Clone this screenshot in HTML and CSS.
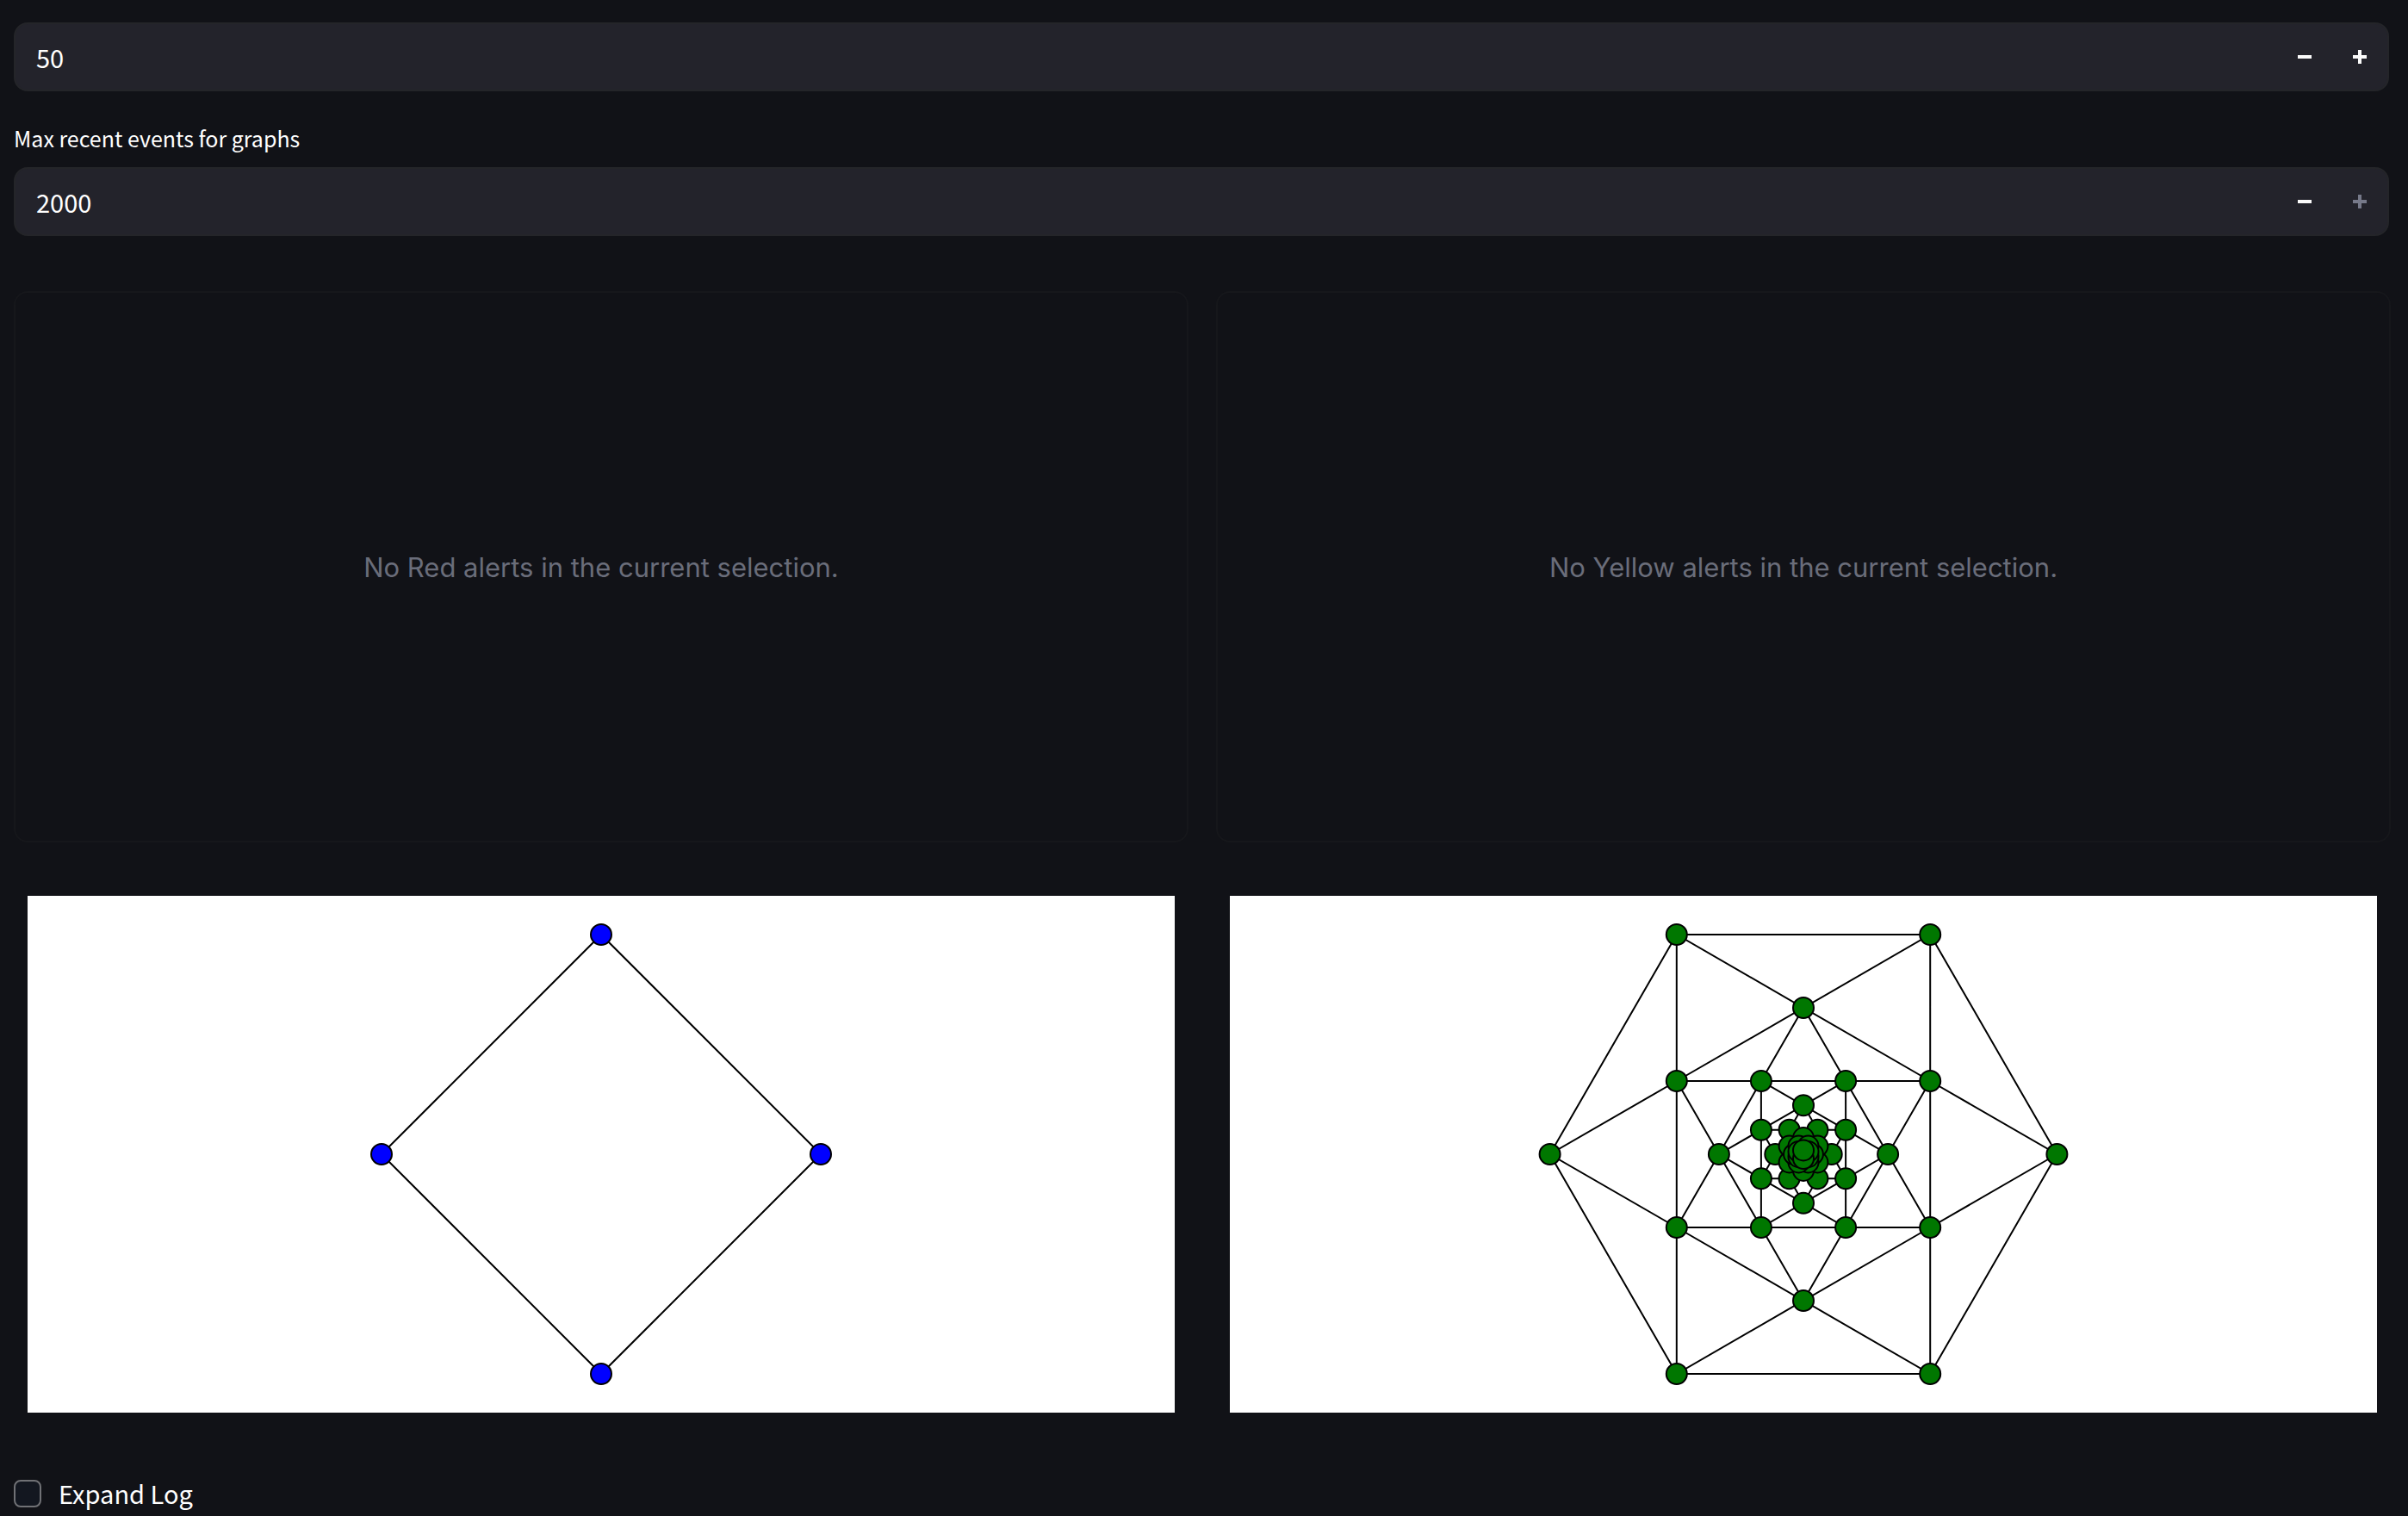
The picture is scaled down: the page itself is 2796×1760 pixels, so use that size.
FILE: index.html
```html
<!DOCTYPE html>
<html lang="en">
<head>
<meta charset="utf-8">
<title>Event monitor</title>
<link rel="stylesheet" href="styles.css">
</head>
<body>
<main class="page">
  <div class="field">
    <div class="number">
      <input class="number-input" type="text" inputmode="numeric" value="50" aria-label="Max rows">
      <button class="step" type="button" aria-label="Decrease"><svg class="icon" viewBox="0 0 16 16"><path d="M0 6h16v4H0z"/></svg></button>
      <button class="step" type="button" aria-label="Increase"><svg class="icon" viewBox="0 0 16 16"><path d="M6 0h4v6h6v4h-6v6H6v-6H0V6h6z"/></svg></button>
    </div>
  </div>
  <div class="field">
    <label class="label" for="max-events">Max recent events for graphs</label>
    <div class="number">
      <input class="number-input" id="max-events" type="text" inputmode="numeric" value="2000">
      <button class="step" type="button" aria-label="Decrease"><svg class="icon" viewBox="0 0 16 16"><path d="M0 6h16v4H0z"/></svg></button>
      <button class="step" type="button" aria-label="Increase" disabled><svg class="icon" viewBox="0 0 16 16"><path d="M6 0h4v6h6v4h-6v6H6v-6H0V6h6z"/></svg></button>
    </div>
  </div>

  <div class="grid">
    <section class="alert"><p class="alert-text">No Red alerts in the current selection.</p></section>
    <section class="alert"><p class="alert-text">No Yellow alerts in the current selection.</p></section>
  </div>

  <div class="grid">
    <figure class="graph">
      <svg class="plot" viewBox="-666 -300 1332 600" role="img" aria-label="Blue event graph">
        <polygon class="edge" points="255,0 0,255 -255,0 0,-255"/>
        <g class="node blue">
          <circle cx="255" cy="0" r="12"/><circle cx="0" cy="255" r="12"/><circle cx="-255" cy="0" r="12"/><circle cx="0" cy="-255" r="12"/>
        </g>
      </svg>
    </figure>
    <figure class="graph">
      <svg class="plot" viewBox="-666 -300 1332 600" role="img" aria-label="Green event graph">
        <!-- outer ring and the links between neighbouring rings -->
        <g class="edge">
          <polygon points="294.4,0 147.2,255 -147.2,255 -294.4,0 -147.2,-255 147.2,-255"/>
          <polygon points="294.4,0 147.2,85 147.2,255 0,170 -147.2,255 -147.2,85 -294.4,0 -147.2,-85 -147.2,-255 0,-170 147.2,-255 147.2,-85"/>
          <polygon points="98.1,0 147.2,85 49.1,85 0,170 -49.1,85 -147.2,85 -98.1,0 -147.2,-85 -49.1,-85 0,-170 49.1,-85 147.2,-85"/>
          <polygon points="98.1,0 49.1,28.3 49.1,85 0,56.7 -49.1,85 -49.1,28.3 -98.1,0 -49.1,-28.3 -49.1,-85 0,-56.7 49.1,-85 49.1,-28.3"/>
          <polygon points="32.7,0 49.1,28.3 16.4,28.3 0,56.7 -16.4,28.3 -49.1,28.3 -32.7,0 -49.1,-28.3 -16.4,-28.3 0,-56.7 16.4,-28.3 49.1,-28.3"/>
        </g>
        <!-- inner rings -->
        <g class="edge">
          <polygon points="147.2,85 0,170 -147.2,85 -147.2,-85 0,-170 147.2,-85"/>
          <polygon points="98.1,0 49.1,85 -49.1,85 -98.1,0 -49.1,-85 49.1,-85"/>
          <polygon points="49.1,28.3 0,56.7 -49.1,28.3 -49.1,-28.3 0,-56.7 49.1,-28.3"/>
        </g>
        <g class="node green">
          <circle cx="294.4" cy="0" r="12"/><circle cx="147.2" cy="255" r="12"/><circle cx="-147.2" cy="255" r="12"/><circle cx="-294.4" cy="0" r="12"/><circle cx="-147.2" cy="-255" r="12"/><circle cx="147.2" cy="-255" r="12"/>
          <circle cx="147.2" cy="85" r="12"/><circle cx="0" cy="170" r="12"/><circle cx="-147.2" cy="85" r="12"/><circle cx="-147.2" cy="-85" r="12"/><circle cx="0" cy="-170" r="12"/><circle cx="147.2" cy="-85" r="12"/>
          <circle cx="98.1" cy="0" r="12"/><circle cx="49.1" cy="85" r="12"/><circle cx="-49.1" cy="85" r="12"/><circle cx="-98.1" cy="0" r="12"/><circle cx="-49.1" cy="-85" r="12"/><circle cx="49.1" cy="-85" r="12"/>
          <circle cx="49.1" cy="28.3" r="12"/><circle cx="0" cy="56.7" r="12"/><circle cx="-49.1" cy="28.3" r="12"/><circle cx="-49.1" cy="-28.3" r="12"/><circle cx="0" cy="-56.7" r="12"/><circle cx="49.1" cy="-28.3" r="12"/>
          <circle cx="32.7" cy="0" r="12"/><circle cx="16.4" cy="28.3" r="12"/><circle cx="-16.4" cy="28.3" r="12"/><circle cx="-32.7" cy="0" r="12"/><circle cx="-16.4" cy="-28.3" r="12"/><circle cx="16.4" cy="-28.3" r="12"/>
          <circle cx="16.4" cy="9.4" r="12"/><circle cx="0" cy="18.9" r="12"/><circle cx="-16.4" cy="9.4" r="12"/><circle cx="-16.4" cy="-9.4" r="12"/><circle cx="0" cy="-18.9" r="12"/><circle cx="16.4" cy="-9.4" r="12"/>
          <circle cx="10.9" cy="0" r="12"/><circle cx="5.5" cy="9.4" r="12"/><circle cx="-5.5" cy="9.4" r="12"/><circle cx="-10.9" cy="0" r="12"/><circle cx="-5.5" cy="-9.4" r="12"/><circle cx="5.5" cy="-9.4" r="12"/>
          <circle cx="5.5" cy="3.1" r="12"/><circle cx="5.5" cy="-3.1" r="12"/><circle cx="-5.5" cy="3.1" r="12"/><circle cx="-5.5" cy="-3.1" r="12"/><circle cx="0" cy="5" r="12"/><circle cx="0" cy="-4.6" r="12"/>
        </g>
      </svg>
    </figure>
  </div>

  <label class="check"><input class="check-box" type="checkbox"><span class="check-text">Expand Log</span></label>
</main>
</body>
</html>
```
FILE: styles.css
```css
* {
  box-sizing: border-box;
}

body {
  margin: 0;
  background: #111217;
  color: #fff;
  font-family: "Noto Sans CJK JP", "Noto Sans", sans-serif;
  font-weight: 400;
}

.page {
  padding: 26px 20px 8px 16px;
}

.field {
  margin-right: 2px;
}

.label {
  display: block;
  padding: 34px 0 14px;
  font-size: 25px;
  line-height: 40px;
}

.number {
  display: flex;
  height: 80px;
  border: 2px solid #242529;
  border-radius: 16px;
  background: #23232b;
  overflow: hidden;
}

.number-input {
  flex: 1;
  min-width: 0;
  padding: 0 24px;
  border: 0;
  outline: 0;
  background: transparent;
  color: inherit;
  font: inherit;
  font-size: 29px;
}

.step {
  display: flex;
  align-items: center;
  justify-content: center;
  width: 64px;
  padding: 0;
  border: 0;
  background: transparent;
  color: #fafafa;
}

.step:disabled {
  color: #767989;
}

.icon {
  width: 16px;
  height: 16px;
  fill: currentColor;
}

.grid {
  display: grid;
  grid-template-columns: 1fr 1fr;
  gap: 32px;
}

.alert {
  display: flex;
  align-items: center;
  justify-content: center;
  height: 640px;
  margin: 64px 0 62px;
  padding-top: 2px;
  border: 2px solid #16171b;
  border-radius: 16px;
}

.alert-text {
  margin: 0;
  color: #6a6d7a;
  font-family: Inter, sans-serif;
  font-size: 31px;
  line-height: 40px;
}

.graph {
  margin: 0 16px;
  background: #fff;
}

.plot {
  display: block;
  width: 100%;
}

.edge {
  fill: none;
  stroke: #000;
  stroke-width: 2;
}

.node {
  stroke: #000;
  stroke-width: 2;
}

.blue {
  fill: #00f;
}

.green {
  fill: #007700;
}

.check {
  display: flex;
  align-items: center;
  gap: 20px;
  width: max-content;
  margin-top: 74px;
  font-size: 29px;
  line-height: 38px;
}

.check-text {
  padding-bottom: 2px;
}

.check-box {
  width: 32px;
  height: 32px;
  margin: 0;
  appearance: none;
  border: 2px solid #707175;
  border-radius: 8px;
  background: #131720;
}

.check-box:checked {
  background: #ff4b4b;
}
```
